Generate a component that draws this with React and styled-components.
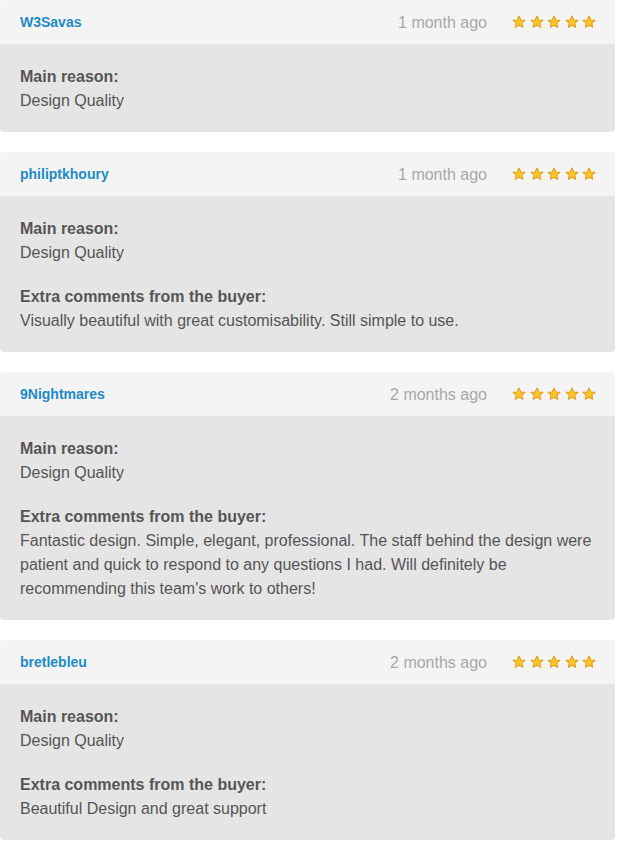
import styled, { createGlobalStyle } from 'styled-components'
import React from 'react'

const reviews = [
  { id: 1, user: 'W3Savas', when: '1 month ago', reason: 'Design Quality' },
  {
    id: 2,
    user: 'philiptkhoury',
    when: '1 month ago',
    reason: 'Design Quality',
    comment: 'Visually beautiful with great customisability. Still simple to use.',
  },
  {
    id: 3,
    user: '9Nightmares',
    when: '2 months ago',
    reason: 'Design Quality',
    comment:
      "Fantastic design. Simple, elegant, professional. The staff behind the design were patient and quick to respond to any questions I had. Will definitely be recommending this team's work to others!",
  },
  {
    id: 4,
    user: 'bretlebleu',
    when: '2 months ago',
    reason: 'Design Quality',
    comment: 'Beautiful Design and great support',
  },
]

const Star = () => (
  <svg width="14" height="14" viewBox="0 0 24 24">
    <path
      d="M12 1.8l3.1 6.6 7.1.8-5.3 4.9 1.5 7.1L12 17.6l-6.4 3.6 1.5-7.1-5.3-4.9 7.1-.8z"
      fill="#fcc52c"
      stroke="#e3a01c"
      strokeWidth="1.8"
      strokeLinejoin="round"
    />
  </svg>
)

const App = () => {
  return (
    <>
      <GlobalStyle />
      <List>
        {reviews.map((r) => (
          <Card key={r.id}>
            <Header>
              <User href="#">{r.user}</User>
              <When>{r.when}</When>
              <Stars>
                {[0, 1, 2, 3, 4].map((i) => (
                  <Star key={i} />
                ))}
              </Stars>
            </Header>
            <Body>
              <Para>
                <Label>Main reason:</Label>
                <Text>{r.reason}</Text>
              </Para>
              {r.comment && (
                <Para>
                  <Label>Extra comments from the buyer:</Label>
                  <Text>{r.comment}</Text>
                </Para>
              )}
            </Body>
          </Card>
        ))}
      </List>
    </>
  )
}

const GlobalStyle = createGlobalStyle`
body {
  margin: 0;
  background: #fff;
  font-family: "Helvetica Neue", "Liberation Sans", Arial, sans-serif;
}
`
const List = styled.div`
display: flex;
flex-direction: column;
gap: 20px;
width: 615px;
`
const Card = styled.div`
border-radius: 4px;
overflow: hidden;
`
const Header = styled.div`
display: flex;
align-items: center;
height: 44px;
padding: 1px 19px 0 20px;
box-sizing: border-box;
background: #f4f4f4;
`
const User = styled.a`
color: #1d8bc4;
font-size: 14px;
font-weight: bold;
text-decoration: none;
margin-top: -2px;
`
const When = styled.span`
margin-left: auto;
color: #a8a8a8;
font-size: 16px;
`
const Stars = styled.div`
display: flex;
gap: 3.5px;
margin-left: 25px;
margin-top: -1px;
`
const Body = styled.div`
background: #e5e5e5;
padding: 21px 20px 19px;
display: flex;
flex-direction: column;
gap: 20px;
color: #555;
font-size: 16px;
line-height: 24px;
`
const Para = styled.div``
const Label = styled.div`
font-weight: bold;
`
const Text = styled.div``

export default App
